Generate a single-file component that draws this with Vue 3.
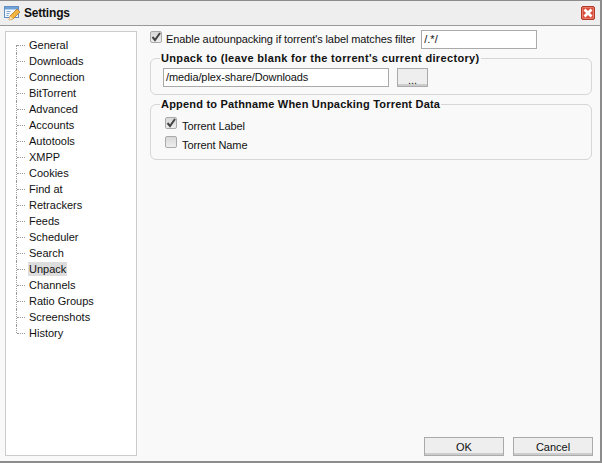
<script setup>
const items = ['General','Downloads','Connection','BitTorrent','Advanced','Accounts','Autotools','XMPP','Cookies','Find at','Retrackers','Feeds','Scheduler','Search','Unpack','Channels','Ratio Groups','Screenshots','History']
</script>

<template>
  <div class="win">
    <header class="title">
      <svg class="ticon" width="16" height="16" viewBox="0 0 16 16">
        <rect x="0.5" y="1.5" width="14" height="11" fill="#f4f8fc" stroke="#5f8fc4"/>
        <rect x="1" y="2" width="13" height="2.5" fill="#6fa3d8"/>
        <path d="M2.5 6.5h4M2.5 8.5h3M2.5 10.5h2" stroke="#7fa6d0"/>
        <path d="M5 15l1-4 7-7 3 3-7 7z" fill="#f2b441" stroke="#b9772a" stroke-width=".8"/>
        <path d="M5 15l1-4 3 3z" fill="#f7e2b4"/>
      </svg>
      <span class="ttext">Settings</span>
      <span class="close">
        <svg width="10" height="10" viewBox="0 0 10 10"><path d="M1.5 1.5l7 7M8.5 1.5l-7 7" stroke="#fff" stroke-width="2.8"/></svg>
      </span>
    </header>
    <main class="body">
      <nav class="tree">
        <ul class="list">
          <li v-for="it in items" :key="it" class="node">
            <span class="label" :class="{ sel: it === 'Unpack' }">{{ it }}</span>
          </li>
        </ul>
      </nav>
      <section class="pane">
        <div class="top">
          <span class="cb on"><svg width="10" height="10" viewBox="0 0 10 10"><path d="M1.5 5l2.5 3L9 1" fill="none" stroke="#444" stroke-width="2"/></svg></span>
          <span class="toplabel">Enable autounpacking if torrent's label matches filter</span>
          <span class="input filter">/.*/</span>
        </div>
        <fieldset class="group g1">
          <legend class="lg1">Unpack to (leave blank for the torrent's current directory)</legend>
          <div class="pathrow">
            <span class="input path">/media/plex-share/Downloads</span>
            <button class="btn dots">...</button>
          </div>
        </fieldset>
        <fieldset class="group g2">
          <legend class="lg2">Append to Pathname When Unpacking Torrent Data</legend>
          <div class="checks">
            <div class="check">
              <span class="cb on"><svg width="10" height="10" viewBox="0 0 10 10"><path d="M1.5 5l2.5 3L9 1" fill="none" stroke="#444" stroke-width="2"/></svg></span>
              <span class="clabel">Torrent Label</span>
            </div>
            <div class="check">
              <span class="cb"></span>
              <span class="clabel">Torrent Name</span>
            </div>
          </div>
        </fieldset>
        <footer class="foot">
          <button class="btn act">OK</button>
          <button class="btn act">Cancel</button>
        </footer>
      </section>
    </main>
  </div>
</template>

<style>
html, body { margin: 0; padding: 0; background: #fff; }
</style>

<style scoped>
.win {
  width: 602px; height: 463px; box-sizing: border-box;
  display: flex; flex-direction: column;
  border-top: 1px solid #8c8c8c; border-right: 2px solid #8c8c8c; border-bottom: 2px solid #8c8c8c;
  background: #f9f9f9;
  font: 11px "Liberation Sans", Arial, sans-serif; color: #111;
}
.title {
  height: 24px; flex: none; display: flex; align-items: center;
  background: #eee; border-bottom: 1px solid #999;
  padding: 0 5px 0 4px;
}
.ticon { flex: none; }
.ttext { font-weight: bold; font-size: 12px; margin-left: 4px; letter-spacing: -0.2px; }
.close {
  margin-left: auto; width: 12px; height: 12px;
  display: flex; align-items: center; justify-content: center;
  background: #d9503f; border: 1px solid #b3382a; border-radius: 2px;
  box-shadow: inset 0 0 0 1px #e77a66;
}
.body { flex: 1; display: flex; min-height: 0; padding: 5px 7px 5px 5px; }
.tree {
  width: 132px; flex: none; box-sizing: border-box;
  background: #fff; border: 1px solid #ccc; padding-top: 5px;
}
.list { list-style: none; margin: 0 0 0 10px; padding: 0; }
.node { height: 16px; display: flex; align-items: center; position: relative; padding-left: 12px; line-height: 14px; }
.node::before {
  content: ""; position: absolute; left: 0; top: 0; bottom: 0; border-left: 1px dotted #999;
}
.node:first-child::before { top: 8px; }
.node:last-child::before { bottom: 8px; }
.node::after {
  content: ""; position: absolute; left: 1px; width: 8px; top: 8px; border-top: 1px dotted #999;
}
.label { padding: 0 1px; height: 14px; }
.sel { background: #ddd; }
.pane { flex: 1; display: flex; flex-direction: column; margin-left: 13px; min-width: 0; }
.top { display: flex; align-items: center; height: 18px; margin-top: -1px; margin-right: 1px; }
.cb {
  width: 10px; height: 10px; flex: none; display: flex; align-items: center; justify-content: center;
  border: 1px solid #aaa; border-radius: 2px; background: linear-gradient(#d8d8d8, #eee);
  margin-bottom: 5px;
}
.toplabel { margin-left: 4px; white-space: nowrap; letter-spacing: -0.1px; }
.input {
  display: block; box-sizing: border-box; height: 19px; line-height: 17px; padding: 0 2px;
  background: #fff; border: 1px solid #aaa; white-space: nowrap;
}
.filter { margin-left: 6px; width: 116px; }
.group { margin: 0 1px 0 0; padding: 0; border: 1px solid #d6d6d6; border-radius: 6px; min-width: 0; }
.group legend { font-weight: bold; padding: 0 1px; line-height: 13px; white-space: nowrap; }
.lg1 { margin-left: 9px; letter-spacing: 0.34px; }
.lg2 { margin-left: 9px; letter-spacing: 0.2px; }
.g1 { margin-top: 4px; height: 43px; box-sizing: border-box; }
.pathrow { display: flex; padding: 3px 0 0 12px; }
.path { width: 226px; letter-spacing: -0.1px; }
.btn {
  box-sizing: border-box; font: inherit; color: #111; padding: 0;
  background: #eee; border: 1px solid #aaa; box-shadow: inset 0 -2px #ccc;
}
.dots { width: 31px; height: 19px; margin-left: 8px; padding-top: 4px; }
.g2 { margin-top: 3px; height: 62px; box-sizing: border-box; }
.checks { padding: 5px 0 0 14px; }
.check { display: flex; align-items: center; height: 19px; gap: 5px; }
.clabel { letter-spacing: -0.1px; }
.foot { margin-top: auto; display: flex; justify-content: flex-end; gap: 9px; }
.act { width: 80px; height: 19px; }
</style>
